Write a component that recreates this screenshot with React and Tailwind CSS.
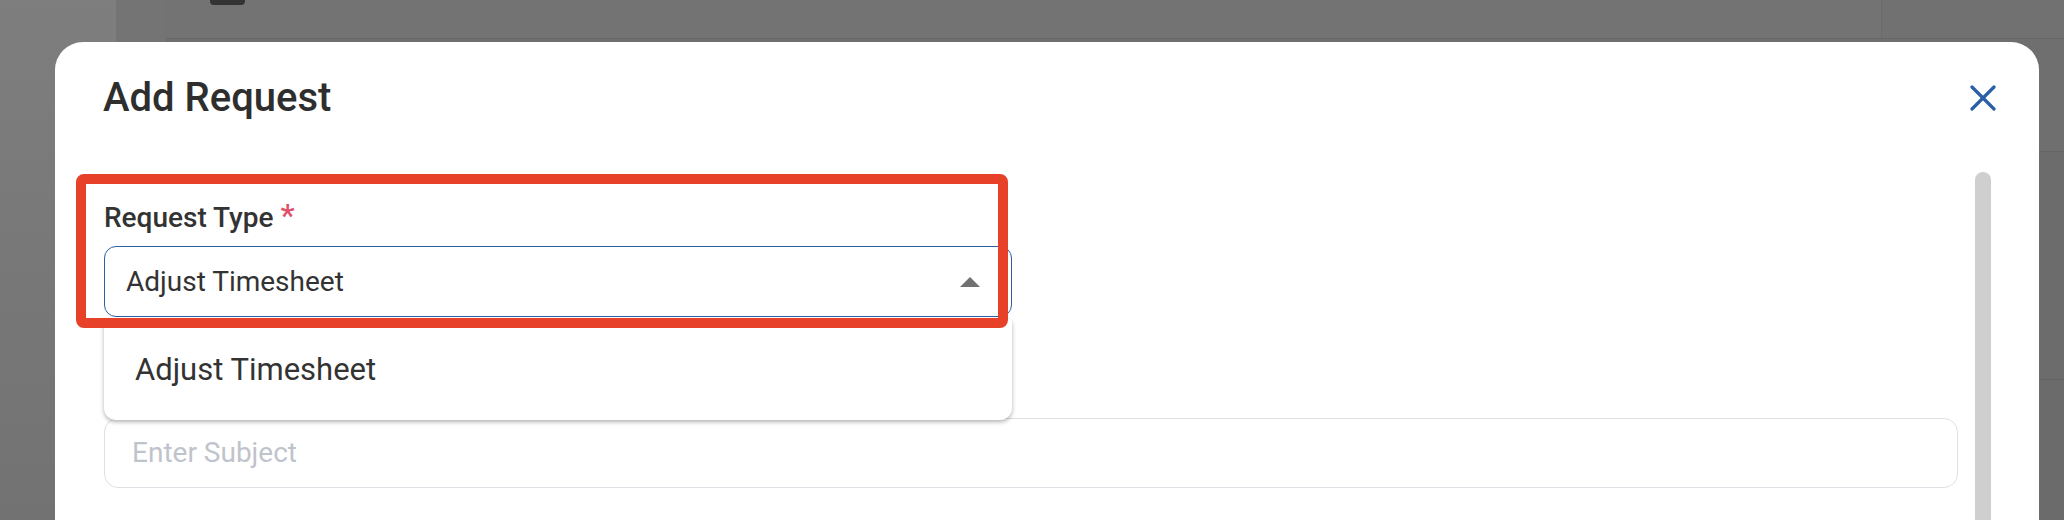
import { useState } from 'react'

function Caret() {
  return (
    <svg width="20" height="10" viewBox="0 0 20 10">
      <polygon points="0,10 10,0 20,10" fill="#717171" />
    </svg>
  )
}

function CloseIcon() {
  return (
    <svg width="26" height="26" viewBox="0 0 26 26">
      <line x1="2" y1="2" x2="24" y2="24" stroke="#2a5ea6" strokeWidth="3.2" strokeLinecap="round" />
      <line x1="24" y1="2" x2="2" y2="24" stroke="#2a5ea6" strokeWidth="3.2" strokeLinecap="round" />
    </svg>
  )
}

// dimmed page behind the dialog
function Backdrop() {
  return (
    <div className="flex h-full">
      <div className="w-[116px] bg-gradient-to-b from-[#7e7e7e] to-[#727272]" />
      <div className="w-[50px] bg-[#747474]" />
      <div className="flex flex-1 flex-col">
        <div className="flex h-[39px] border-b border-[#676767]">
          <div className="w-[1716px] border-r border-[#6a6a6a] bg-[#737373] pl-[44px]">
            <div className="h-[5px] w-[35px] rounded-b-[4px] bg-[#333333]" />
          </div>
          <div className="flex-1 bg-[#717171]" />
        </div>
        <div className="h-[113px] border-b border-[#656565] bg-[#6f6f6f]" />
        <div className="h-[228px] border-b border-[#646464] bg-[#6c6c6c]" />
        <div className="flex-1 bg-[#6b6b6b]" />
      </div>
    </div>
  )
}

export default function App() {
  const [value] = useState('Adjust Timesheet')

  return (
    <div className="relative h-[520px] w-[2064px] overflow-hidden bg-[#6f7071] font-['Roboto',sans-serif]">
      <Backdrop />

      {/* ─── Dialog ─── */}
      <div className="absolute left-[55px] top-[42px] h-[560px] w-[1984px] rounded-[28px] bg-white">
        <div className="flex h-[130px] items-start justify-between pl-[48px] pr-[43px] pt-[32px]">
          <h2 className="text-[40px] font-medium leading-[48px] text-[#2e2e2e]">Add Request</h2>
          <button className="mt-[11px] flex h-[26px] w-[26px] items-center justify-center">
            <CloseIcon />
          </button>
        </div>

        <div className="flex pl-[49px] pr-[48px]">
          <div className="flex flex-1 flex-col gap-[57px] pt-[30px]">
            <div className="flex w-[908px] flex-col gap-[12px]">
              <label className="flex items-start text-[28px] font-medium leading-[32px] text-[#333333]">
                Request Type
                <span className="ml-[7px] -mt-[2px] text-[32px] leading-[30px] text-[#e0506a]">*</span>
              </label>
              <div className="relative">
                <div className="flex h-[71px] items-center justify-between rounded-[12px] border-[1.5px] border-[#2b5ea3] pl-[21px] pr-[31px]">
                  <span className="text-[28px] leading-[32px] text-[#333333]">{value}</span>
                  <Caret />
                </div>
                <div className="absolute left-0 top-full z-10 mt-[2px] w-full rounded-b-[12px] rounded-t-[4px] bg-white pb-[30px] pl-[31px] pt-[31px] shadow-[0_2px_4px_rgba(0,0,0,0.3)]">
                  <div className="text-[31px] leading-[40px] text-[#333333]">Adjust Timesheet</div>
                </div>
              </div>
            </div>

            <div className="flex flex-col gap-[12px]">
              {/* label row sits under the open menu */}
              <div className="h-[32px]" />
              <div className="flex h-[70px] items-center rounded-[14px] border-[1.5px] border-[#dfe0e5] pl-[27px]">
                <span className="text-[28px] leading-[32px] text-[#bfc4cc]">Enter Subject</span>
              </div>
            </div>
          </div>
          <div className="ml-[17px] h-[420px] w-[16px] rounded-full bg-[#cfcfcf]" />
        </div>
      </div>

      {/* ─── Annotation box ─── */}
      <div className="absolute left-[76px] top-[174px] z-20 h-[154px] w-[932px] rounded-[8px] border-[10px] border-[#e8412a]" />
    </div>
  )
}
